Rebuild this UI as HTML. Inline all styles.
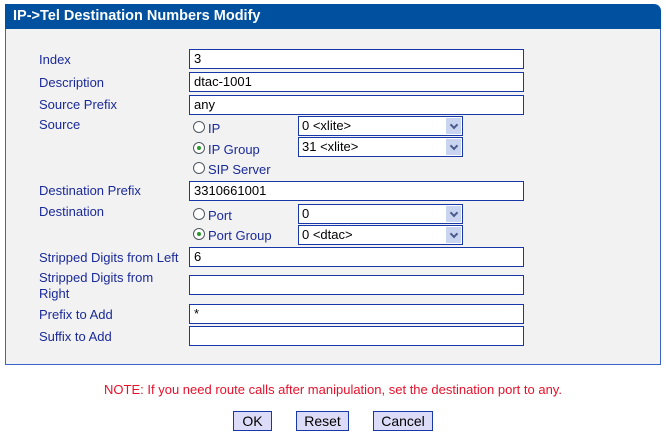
<!DOCTYPE html>
<html><head><meta charset="utf-8"><style>
body{margin:0;width:666px;height:435px;background:#fff;font-family:"Liberation Sans",Arial,sans-serif;font-size:13px;position:relative;overflow:hidden}
.a{position:absolute}
.hdr{left:5px;top:4px;width:656px;height:25px;background:#0050a0;border-radius:0 7px 0 0;color:#fff;font-weight:bold;font-size:14.5px;line-height:25px;text-indent:8px}
.body{left:5px;top:29px;width:654px;height:335px;background:#f2f2f2;border:1px solid #3a64c8;border-top:none}
.l{color:#1a2a9a;left:39px;line-height:15px}
.in{left:189px;width:333px;height:18px;background:#fff;border:1px solid #1838a8;line-height:18px;text-indent:4px;color:#000}
.sel{left:298px;width:163px;height:18px;background:#fff;border:1px solid #1838a8;line-height:18px;text-indent:3px}
.sel:after{content:"";position:absolute;right:1px;top:1px;width:15px;height:16px;background:#c8d4f0}
.sel i{position:absolute;right:5px;top:5px;width:4px;height:4px;border-right:2px solid #4a5a8a;border-bottom:2px solid #4a5a8a;transform:rotate(45deg);z-index:2}
.r{left:193px;width:10px;height:10px;border:1px solid #505860;border-radius:50%;background:#fff}
.r.on:after{content:"";position:absolute;left:3px;top:3px;width:4px;height:4px;border-radius:50%;background:#2a9a2a}
.rt{left:208px;color:#1a2a9a}
.btn{top:411px;height:18px;background:#dcdcf8;border:1px solid #1838a8;text-align:center;line-height:18px;font-size:14px}
</style></head><body>
<div class="a hdr">IP-&gt;Tel Destination Numbers Modify</div>
<div class="a body"></div>
<div class="a l" style="top:52px">Index</div>
<div class="a l" style="top:75px">Description</div>
<div class="a l" style="top:97px">Source Prefix</div>
<div class="a l" style="top:117px">Source</div>
<div class="a l" style="top:183px">Destination Prefix</div>
<div class="a l" style="top:204px">Destination</div>
<div class="a l" style="top:250px">Stripped Digits from Left</div>
<div class="a l" style="top:270px;line-height:16px">Stripped Digits from<br>Right</div>
<div class="a l" style="top:307px">Prefix to Add</div>
<div class="a l" style="top:329px">Suffix to Add</div>

<div class="a in" style="top:49px">3</div>
<div class="a in" style="top:72px">dtac-1001</div>
<div class="a in" style="top:95px">any</div>
<div class="a in" style="top:181px">3310661001</div>
<div class="a in" style="top:247px">6</div>
<div class="a in" style="top:275px"></div>
<div class="a in" style="top:304px">*</div>
<div class="a in" style="top:326px"></div>

<div class="a sel" style="top:116px">0 &lt;xlite&gt;<i></i></div>
<div class="a sel" style="top:137px">31 &lt;xlite&gt;<i></i></div>
<div class="a sel" style="top:204px">0<i></i></div>
<div class="a sel" style="top:225px">0 &lt;dtac&gt;<i></i></div>

<div class="a r" style="top:121px"></div><div class="a rt" style="top:121px">IP</div>
<div class="a r on" style="top:142px"></div><div class="a rt" style="top:142px">IP Group</div>
<div class="a r" style="top:162px"></div><div class="a rt" style="top:162px">SIP Server</div>
<div class="a r" style="top:208px"></div><div class="a rt" style="top:208px">Port</div>
<div class="a r on" style="top:228px"></div><div class="a rt" style="top:228px">Port Group</div>

<div class="a" style="left:0;width:666px;top:382px;text-align:center;color:#e8102a">NOTE: If you need route calls after manipulation, set the destination port to any.</div>
<div class="a btn" style="left:233px;width:37px">OK</div>
<div class="a btn" style="left:296px;width:51px">Reset</div>
<div class="a btn" style="left:373px;width:58px">Cancel</div>
</body></html>
